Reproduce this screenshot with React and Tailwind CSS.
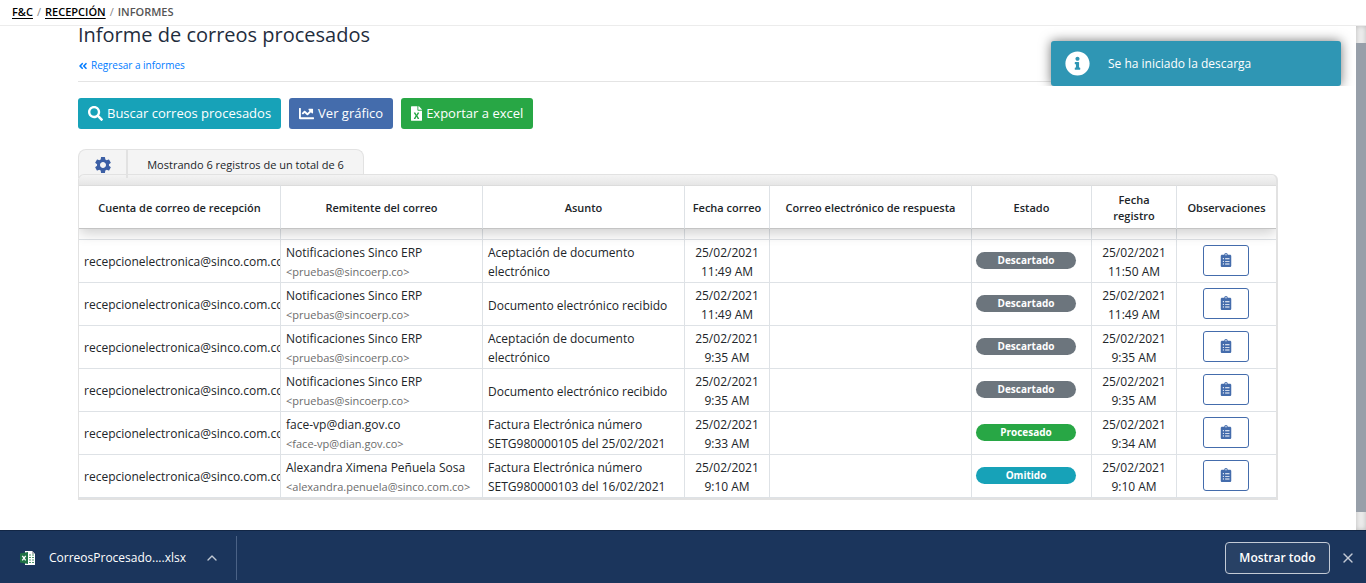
import React from 'react';
import { ChevronUp, X } from 'lucide-react';
import {
  FaAngleDoubleLeft,
  FaChartLine,
  FaClipboardList,
  FaFileExcel,
  FaInfoCircle,
  FaSearch,
} from 'react-icons/fa';
import { MdSettings } from 'react-icons/md';

const CUENTA = 'recepcionelectronica@sinco.com.co';

const columns = [
  { label: 'Cuenta de correo de recepción', width: 'w-[202px] px-1' },
  { label: 'Remitente del correo', width: 'w-[202px] px-1' },
  { label: 'Asunto', width: 'w-[202px] px-1' },
  { label: 'Fecha correo', width: 'w-[85px] px-1' },
  { label: 'Correo electrónico de respuesta', width: 'w-[202px] px-1' },
  { label: 'Estado', width: 'w-[120px] px-1' },
  { label: 'Fecha registro', width: 'w-[85px] px-4' },
  { label: 'Observaciones', width: 'w-[99px] px-1' },
];

const rows = [
  {
    nombre: 'Notificaciones Sinco ERP',
    correo: 'pruebas@sincoerp.co',
    asunto: 'Aceptación de documento electrónico',
    fecha: ['25/02/2021', '11:49 AM'],
    estado: 'Descartado',
    registro: ['25/02/2021', '11:50 AM'],
  },
  {
    nombre: 'Notificaciones Sinco ERP',
    correo: 'pruebas@sincoerp.co',
    asunto: 'Documento electrónico recibido',
    fecha: ['25/02/2021', '11:49 AM'],
    estado: 'Descartado',
    registro: ['25/02/2021', '11:49 AM'],
  },
  {
    nombre: 'Notificaciones Sinco ERP',
    correo: 'pruebas@sincoerp.co',
    asunto: 'Aceptación de documento electrónico',
    fecha: ['25/02/2021', '9:35 AM'],
    estado: 'Descartado',
    registro: ['25/02/2021', '9:35 AM'],
  },
  {
    nombre: 'Notificaciones Sinco ERP',
    correo: 'pruebas@sincoerp.co',
    asunto: 'Documento electrónico recibido',
    fecha: ['25/02/2021', '9:35 AM'],
    estado: 'Descartado',
    registro: ['25/02/2021', '9:35 AM'],
  },
  {
    nombre: 'face-vp@dian.gov.co',
    correo: 'face-vp@dian.gov.co',
    asunto: 'Factura Electrónica número SETG980000105 del 25/02/2021',
    fecha: ['25/02/2021', '9:33 AM'],
    estado: 'Procesado',
    registro: ['25/02/2021', '9:34 AM'],
  },
  {
    nombre: 'Alexandra Ximena Peñuela Sosa',
    correo: 'alexandra.penuela@sinco.com.co',
    asunto: 'Factura Electrónica número SETG980000103 del 16/02/2021',
    fecha: ['25/02/2021', '9:10 AM'],
    estado: 'Omitido',
    registro: ['25/02/2021', '9:10 AM'],
  },
];

const estadoColor = {
  Descartado: 'bg-[#6c757d]',
  Procesado: 'bg-[#28a745]',
  Omitido: 'bg-[#17a2b8]',
};

function Breadcrumb() {
  return (
    <nav
      aria-label="Ruta"
      className="flex h-[26px] shrink-0 items-center gap-1 border-b border-[#ececec] px-3 text-[11px] font-semibold text-[#555]"
    >
      <a href="#fc" className="text-black underline underline-offset-2">
        F&amp;C
      </a>
      <span className="font-normal text-[#888]">/</span>
      <a href="#recepcion" className="text-black underline underline-offset-2">
        RECEPCIÓN
      </a>
      <span className="font-normal text-[#888]">/</span>
      <span>INFORMES</span>
    </nav>
  );
}

function ActionButton({ icon: Icon, color, iconWidth = 'w-[15px]', children }) {
  return (
    <button
      type="button"
      className={`flex h-[31px] items-center gap-1 rounded-[3px] px-[10px] text-[13px] whitespace-nowrap text-white ${color}`}
    >
      <Icon className={`h-[15px] shrink-0 ${iconWidth}`} aria-hidden />
      {children}
    </button>
  );
}

function Fecha({ value }) {
  return (
    <>
      {value[0]}
      <br />
      {value[1]}
    </>
  );
}

function CorreosTable() {
  const cell = 'border-r border-b border-[#dee2e6] last:border-r-0';
  const textCell = `${cell} px-[5px] pt-[2px] pb-0`;

  return (
    <div className="rounded-t-md border border-r-2 border-b-2 border-[#e2e2e2] bg-linear-to-b from-[#f4f4f4] to-[#e6e6e6] bg-[length:100%_10px] bg-no-repeat pt-[10px]">
      <table className="w-full table-fixed border-separate border-spacing-0 text-[12px] leading-[19px] text-[#212529]">
        <thead className="relative bg-white shadow-[0_4px_14px_rgba(0,0,0,0.2)] [clip-path:inset(0_0_-30px_0)]">
          <tr className="h-11">
            {columns.map((col) => (
              <th
                key={col.label}
                scope="col"
                className={`border-t border-r border-b border-t-[#dcdcdc] border-r-[#dee2e6] border-b-[#c4c4c4] pt-[2px] pb-0 text-[11px] leading-4 font-semibold last:border-r-0 ${col.width}`}
              >
                {col.label}
              </th>
            ))}
          </tr>
        </thead>
        <tbody>
          <tr className="h-[11px]" aria-hidden>
            {columns.map((col) => (
              <td key={col.label} className={`${cell} p-0`} />
            ))}
          </tr>
          {rows.map((row, i) => (
            <tr key={i} className="h-[43px]">
              <td className={`${cell} overflow-hidden py-0 pr-0 pl-[5px] whitespace-nowrap`}>{CUENTA}</td>
              <td className={`${textCell} overflow-hidden whitespace-nowrap`}>
                {row.nombre}
                <br />
                <span className="text-[11px] text-[#6c6c6c]">&lt;{row.correo}&gt;</span>
              </td>
              <td className={textCell}>{row.asunto}</td>
              <td className={`${textCell} text-center`}>
                <Fecha value={row.fecha} />
              </td>
              <td className={textCell} />
              <td className={`${cell} px-1 pt-0 pb-[2px]`}>
                <span
                  className={`block w-[100px] rounded-full text-center text-[10px] leading-[17px] font-bold text-white ${estadoColor[row.estado]}`}
                >
                  {row.estado}
                </span>
              </td>
              <td className={`${textCell} text-center`}>
                <Fecha value={row.registro} />
              </td>
              <td className={`${cell} pt-0 pr-[6px] pb-[2px] pl-1`}>
                <button
                  type="button"
                  aria-label="Ver observaciones"
                  className="mx-auto flex h-[31px] w-[46px] items-center justify-center rounded-[3px] border border-[#446cac] text-[#446cac]"
                >
                  <FaClipboardList className="size-[14px]" aria-hidden />
                </button>
              </td>
            </tr>
          ))}
        </tbody>
      </table>
    </div>
  );
}

function Toast() {
  return (
    <div role="status" className="absolute top-0 right-[10px] overflow-hidden px-[15px] pt-[15px]">
      <div className="flex h-[45px] w-[290px] items-center gap-[18px] rounded-[3px] bg-[#2f96b4] px-[14px] text-[12px] text-white shadow-[0_0_12px_#777]">
        <FaInfoCircle className="size-[25px]" aria-hidden />
        <span>Se ha iniciado la descarga</span>
      </div>
    </div>
  );
}

function ExcelFileIcon() {
  return (
    <svg viewBox="0 0 16 16" className="size-4" aria-hidden>
      <path d="M5 1h7l3 3v11H5z" fill="#fff" />
      <path d="M12 1v3h3z" fill="#b5b5b5" />
      <path d="M9 5h2M12 5h2M9 7.500h2M12 7.500h2M9 10h2M12 10h2M9 12.500h2M12 12.500h2" stroke="#4f9a6d" />
      <path d="M0 3.500 8 2v12l-8-1.500z" fill="#1e7145" />
      <path d="m2.300 5.800 3.400 4.600M5.700 5.800l-3.400 4.600" stroke="#fff" strokeWidth="1.300" />
    </svg>
  );
}

function DownloadBar() {
  return (
    <footer className="flex h-[53px] shrink-0 items-center border-t border-[#122645] bg-[#1b355c] pt-[2px] text-[12px] text-white">
      <div className="flex h-[44px] w-[237px] items-center border-r border-[#4b6286] pr-4 pl-5">
        <ExcelFileIcon />
        <span className="ml-[13px] flex-1">CorreosProcesado....xlsx</span>
        <button type="button" aria-label="Opciones de la descarga" className="text-[#c3cad5]">
          <ChevronUp className="size-4" aria-hidden />
        </button>
      </div>
      <button
        type="button"
        className="ml-auto h-8 w-[105px] rounded border border-[#c3cad5] bg-[#284165] font-semibold"
      >
        Mostrar todo
      </button>
      <button type="button" aria-label="Cerrar" className="mx-[10px] text-[#c3cad5]">
        <X className="size-4" aria-hidden />
      </button>
    </footer>
  );
}

export default function App() {
  return (
    <div className="flex h-screen flex-col bg-white font-['Open_Sans','Noto_Sans',sans-serif]">
      <Breadcrumb />
      <div className="relative flex min-h-0 flex-1">
        <main className="min-w-0 flex-1 overflow-hidden px-[78px]">
          <div className="mx-auto max-w-[1200px]">
            <h1 className="text-[20px] leading-[18px] font-medium text-[#1f2d3d]">
              Informe de correos procesados
            </h1>
            <div className="mt-[13px] border-b border-[#e4e4e4] pb-[7px]">
              <a href="#informes" className="flex h-[17px] items-center gap-[3px] text-[10px] text-[#007bff]">
                <FaAngleDoubleLeft className="size-[10px]" aria-hidden />
                Regresar a informes
              </a>
            </div>
            <div className="mt-4 flex gap-2">
              <ActionButton icon={FaSearch} color="bg-[#17a2b8]">
                Buscar correos procesados
              </ActionButton>
              <ActionButton icon={FaChartLine} color="bg-[#446cac]">
                Ver gráfico
              </ActionButton>
              <ActionButton icon={FaFileExcel} color="bg-[#28a745]" iconWidth="w-[11px]">
                Exportar a excel
              </ActionButton>
            </div>
            <div className="mt-5 -mb-1 flex h-[29px] w-[286px] rounded-t-lg border border-b-0 border-[#e2e2e2] bg-[#f4f4f4] text-[11px] text-[#212529]">
              <button
                type="button"
                aria-label="Configurar columnas"
                className="flex w-[49px] items-center justify-center border-r-2 border-[#e2e2e2] pt-[2px] text-[#3c5fa5]"
              >
                <MdSettings className="size-5" aria-hidden />
              </button>
              <p className="flex flex-1 items-center justify-center pt-[2px]">
                Mostrando 6 registros de un total de 6
              </p>
            </div>
            <CorreosTable />
          </div>
        </main>
        <div aria-hidden className="w-[10px] shrink-0 bg-[#ececec] pt-[17px] pb-[18px] shadow-[inset_0_0_5px_#bbb]">
          <div className="h-full bg-[#979fa9]" />
        </div>
        <Toast />
      </div>
      <DownloadBar />
    </div>
  );
}
